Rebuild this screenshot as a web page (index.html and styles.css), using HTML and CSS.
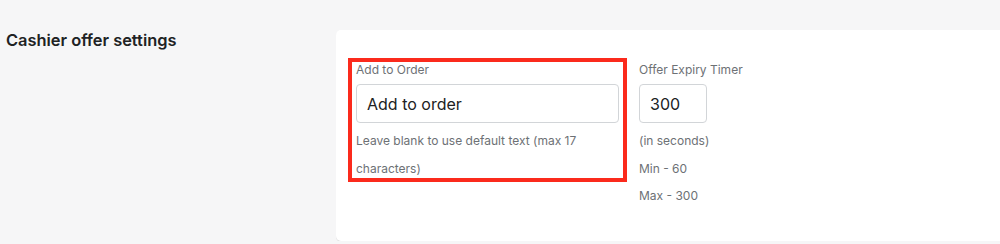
FILE: index.html
```html
<!DOCTYPE html>
<html lang="en">
<head>
<meta charset="utf-8">
<title>Cashier offer settings</title>
<link rel="stylesheet" href="styles.css">
</head>
<body>
<div class="page">
  <div class="aside">
    <h2 class="heading">Cashier offer settings</h2>
  </div>
  <div class="card">
    <div class="fields">
      <div class="field highlighted">
        <label class="label" for="atc">Add to Order</label>
        <input class="input wide" id="atc" type="text" value="Add to order">
        <p class="help">Leave blank to use default text (max 17 characters)</p>
      </div>
      <div class="field timer">
        <label class="label" for="timer">Offer Expiry Timer</label>
        <input class="input narrow" id="timer" type="text" value="300">
        <p class="help">(in seconds)</p>
        <p class="help">Min - 60</p>
        <p class="help">Max - 300</p>
      </div>
    </div>
  </div>
</div>
</body>
</html>
```
FILE: styles.css
```css
* { box-sizing: border-box; }
html, body {
  margin: 0;
  padding: 0;
  background: #f6f6f7;
  overflow: hidden;
}
body {
  font-family: Inter, "Noto Sans", "Liberation Sans", sans-serif;
  color: #202223;
}
.page {
  display: flex;
  align-items: flex-start;
  width: 1000px;
  padding-top: 30px;
}
.aside {
  width: 336px;
  flex: none;
  padding-left: 6px;
}
.heading {
  margin: 0;
  font-size: 16.4px;
  font-weight: 600;
  line-height: 21px;
  color: #202223;
}
.card {
  flex: 1;
  min-width: 0;
  background: #ffffff;
  border-radius: 5px 0 0 5px;
  box-shadow: 0 1px 0 rgba(0, 0, 0, 0.09);
  padding: 28px 12px 27px 12px;
  height: 211px;
}
.fields {
  display: flex;
  align-items: flex-start;
  gap: 12px;
}
.field {
  display: flex;
  flex-direction: column;
  flex: none;
}
.field > * { flex-shrink: 0; }
.highlighted {
  width: 279px;
  height: 124px;
  border: 4px solid #fb2a1c;
  padding: 0 4px;
  overflow: visible;
}
.timer {
  padding-top: 4px;
}
.label {
  font-size: 12px;
  line-height: 16px;
  color: #6d7175;
  margin-bottom: 6px;
}
.input {
  font-family: inherit;
  font-size: 16px;
  color: #202223;
  height: 39px;
  border: 1px solid #d2d5d8;
  border-radius: 4px;
  padding: 0 10px;
  background: #fff;
  outline: none;
}
.wide { width: 263px; }
.narrow { width: 68px; }
.help {
  margin: 0;
  font-size: 12px;
  line-height: 27.5px;
  color: #6d7175;
}
.input + .help { margin-top: 4px; }
```
